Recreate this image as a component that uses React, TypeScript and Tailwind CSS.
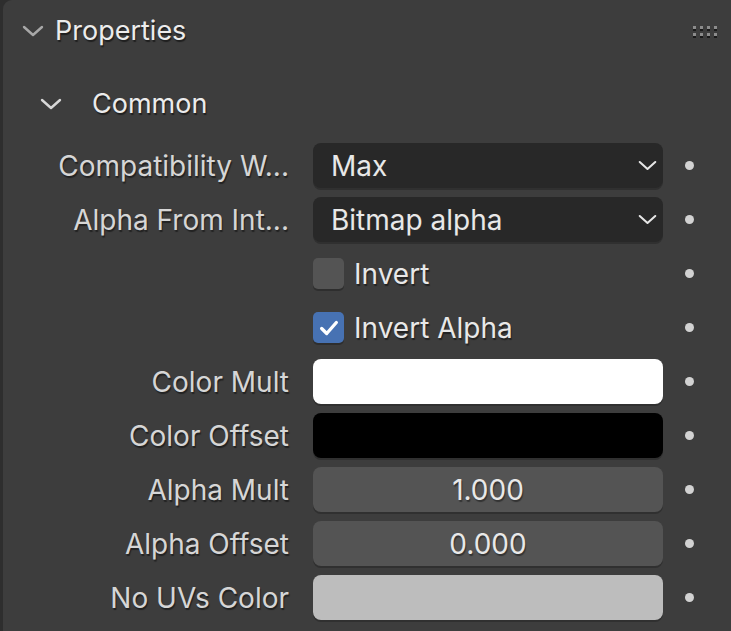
import React from "react";

const font = { fontFamily: "Inter, 'Noto Sans', sans-serif" };

function Chevron({ className }: { className: string }) {
  return (
    <svg viewBox="0 0 22 12" className={className} fill="none" stroke="currentColor" strokeWidth={2.4} strokeLinecap="round" strokeLinejoin="round">
      <path d="M2 2 L11 10 L20 2" />
    </svg>
  );
}

function Dot() {
  return <div className="ml-[22px] h-[9px] w-[9px] shrink-0 rounded-full bg-[#d2d2d2]" />;
}

function Label({ text }: { text: string }) {
  return (
    <div className="w-[286px] shrink-0 whitespace-nowrap text-right text-[28px] leading-[34px] text-[#d6d6d6] [text-shadow:1px_2px_1px_rgba(0,0,0,0.45)]">
      {text}
    </div>
  );
}

function Dropdown({ label, value }: { label: string; value: string }) {
  return (
    <div className="flex h-[45px] items-center">
      <Label text={label} />
      <div className="ml-[24px] flex h-[45px] w-[350px] shrink-0 items-center justify-between rounded-[8px] bg-[#282828] pl-[18px] pr-[6px] shadow-[0_2px_0_#303030]">
        <span className="text-[28px] leading-[34px] text-[#e8e8e8]">{value}</span>
        <Chevron className="h-[11px] w-[19px] text-[#e6e6e6]" />
      </div>
      <Dot />
    </div>
  );
}

function Check({ label, checked }: { label: string; checked: boolean }) {
  return (
    <div className="flex h-[45px] items-center">
      <div className="w-[286px] shrink-0" />
      <div className="ml-[24px] flex w-[350px] shrink-0 items-center">
        <div
          className={
            checked
              ? "flex h-[31px] w-[31px] items-center justify-center rounded-[5px] bg-[#4772b3] shadow-[0_2px_0_#2e2e2e]"
              : "h-[31px] w-[31px] rounded-[5px] bg-[#545454] shadow-[0_2px_0_#2e2e2e]"
          }
        >
          {checked && (
            <svg viewBox="0 0 24 24" className="h-[22px] w-[22px]" fill="none" stroke="#ffffff" strokeWidth={3.6} strokeLinecap="round" strokeLinejoin="round">
              <path d="M4 12.5 L9.5 18 L20 6" />
            </svg>
          )}
        </div>
        <span className="ml-[10px] text-[28px] leading-[34px] text-[#e8e8e8] [text-shadow:1px_2px_1px_rgba(0,0,0,0.45)]">{label}</span>
      </div>
      <Dot />
    </div>
  );
}

function Swatch({ label, color }: { label: string; color: string }) {
  return (
    <div className="flex h-[45px] items-center">
      <Label text={label} />
      <div className={`ml-[24px] h-[45px] w-[350px] shrink-0 rounded-[8px] shadow-[0_2px_0_#303030] ${color}`} />
      <Dot />
    </div>
  );
}

function NumField({ label, value }: { label: string; value: string }) {
  return (
    <div className="flex h-[45px] items-center">
      <Label text={label} />
      <div className="ml-[24px] flex h-[45px] w-[350px] shrink-0 items-center justify-center rounded-[8px] bg-[#545454] shadow-[0_2px_0_#303030]">
        <span className="text-[28px] leading-[34px] text-[#e8e8e8] [text-shadow:1px_2px_1px_rgba(0,0,0,0.4)]">{value}</span>
      </div>
      <Dot />
    </div>
  );
}

function Grip() {
  return (
    <div className="grid grid-cols-4 gap-x-[4px] gap-y-[4px]">
      {Array.from({ length: 8 }).map((_, i) => (
        <div key={i} className="h-[3px] w-[3px] bg-[#8c8c8c] shadow-[0_2px_0_#1a1a1a]" />
      ))}
    </div>
  );
}

export default function App() {
  return (
    <div className="flex h-[631px] w-[731px] overflow-hidden bg-[#2e2e2e]" style={font}>
      <div className="ml-[3px] flex-1 rounded-tl-[9px] bg-[#3d3d3d]">
        <div className="flex h-[62px] items-center pl-[19px] pr-[14px]">
          <Chevron className="h-[12px] w-[22px] text-[#a8a8a8]" />
          <span className="ml-[11px] text-[27px] leading-[34px] text-[#ececec] [text-shadow:1px_2px_1px_rgba(0,0,0,0.5)]">Properties</span>
          <div className="ml-auto">
            <Grip />
          </div>
        </div>
        <div className="mt-[15px] flex h-[54px] items-center pl-[37px]">
          <Chevron className="h-[12px] w-[22px] text-[#d8d8d8]" />
          <span className="ml-[30px] text-[27px] leading-[34px] text-[#ececec] [text-shadow:1px_2px_1px_rgba(0,0,0,0.5)]">Common</span>
        </div>
        <div className="mt-[12px] flex flex-col gap-[9px]">
          <Dropdown label="Compatibility W..." value="Max" />
          <Dropdown label="Alpha From Int..." value="Bitmap alpha" />
          <Check label="Invert" checked={false} />
          <Check label="Invert Alpha" checked={true} />
          <Swatch label="Color Mult" color="bg-white" />
          <Swatch label="Color Offset" color="bg-black" />
          <NumField label="Alpha Mult" value="1.000" />
          <NumField label="Alpha Offset" value="0.000" />
          <Swatch label="No UVs Color" color="bg-[#bdbdbd]" />
        </div>
      </div>
    </div>
  );
}
